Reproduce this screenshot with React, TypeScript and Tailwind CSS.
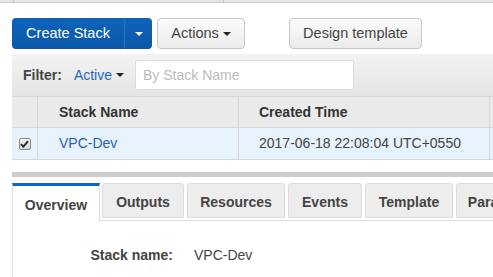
import React from "react";

function Caret({ className = "" }: { className?: string }) {
  return (
    <svg width="8" height="4" viewBox="0 0 8 4" className={className}>
      <path d="M0 0 L8 0 L4 4 Z" fill="currentColor" />
    </svg>
  );
}

export default function App() {
  const tabs = ["Outputs", "Resources", "Events", "Template", "Parameters"];
  const tabW = [82, 98, 74, 88, 100];
  return (
    <div
      className="w-[493px] h-[277px] overflow-hidden bg-white text-[14px] text-[#444]"
      style={{ fontFamily: '"Liberation Sans", Arial, sans-serif' }}
    >
      {/* top strip */}
      <div className="flex h-[3px] bg-[#e4e4e4] border-b border-[#cfcfcf]">
        <div className="w-[13px]" />
        <div className="w-[210px] border-l border-[#c8c8c8]" />
        <div className="flex-1 border-l border-[#c8c8c8]" />
      </div>

      {/* buttons */}
      <div className="flex items-start pl-[12px] pt-[15px] h-[51px]">
        <div className="flex h-[31px] w-[140px] rounded-[4px] bg-gradient-to-b from-[#0e63b8] to-[#0a58ab] text-white">
          <div className="w-[112px] flex items-center justify-center text-[14.5px]">Create Stack</div>
          <div className="w-px bg-[#2f74c0]" />
          <div className="flex-1 flex items-center justify-center">
            <Caret />
          </div>
        </div>
        <div className="ml-[5px] flex h-[31px] w-[88px] items-center justify-center gap-[4px] rounded-[4px] border border-[#c8c8c8] bg-gradient-to-b from-[#fbfbfb] to-[#ececec] text-[14.5px] text-[#444]">
          <span>Actions</span>
          <Caret className="text-[#222]" />
        </div>
        <div className="ml-[44px] flex h-[31px] w-[133px] items-center justify-center rounded-[4px] border border-[#c8c8c8] bg-gradient-to-b from-[#fbfbfb] to-[#ececec] text-[14.5px] text-[#444]">
          Design template
        </div>
      </div>

      {/* panel */}
      <div className="ml-[12px] overflow-hidden">
        {/* filter bar */}
        <div className="flex h-[42px] items-center bg-gradient-to-b from-[#f3f3f3] to-[#e4e4e4] pl-[11px]">
          <span className="font-bold text-[#444]">Filter:</span>
          <span className="ml-[12px] text-[#1e66c5]">Active</span>
          <Caret className="ml-[4px] text-[#222]" />
          <div className="ml-[11px] flex h-[30px] w-[219px] items-center rounded-[2px] border border-[#dcdcdc] bg-white pl-[7px] text-[#bbb]">
            By Stack Name
          </div>
        </div>

        {/* table header */}
        <div className="flex h-[32px] bg-[#eaeaea] border-t border-[#d8d8d8] border-b border-[#d5d5d5] font-bold text-[#333]">
          <div className="w-[25px] shrink-0" />
          <div className="w-[201px] shrink-0 border-l border-[#d5d5d5] flex items-center pl-[21px]">Stack Name</div>
          <div className="w-[251px] shrink-0 border-l border-[#d5d5d5] flex items-center pl-[20px]">Created Time</div>
          <div className="flex-1 border-l border-[#d5d5d5]" />
        </div>

        {/* row */}
        <div className="flex h-[32px] bg-[#e6f2fc] border-b border-[#d5d5d5]">
          <div className="w-[25px] shrink-0 flex items-center justify-center">
            <div className="flex h-[12px] w-[12px] items-center justify-center rounded-[2px] border border-[#888] bg-gradient-to-b from-[#f4f4f4] to-[#d8d8d8]">
              <svg width="9" height="8" viewBox="0 0 9 8">
                <path d="M1 4.2 L3.4 6.6 L8 1.2" stroke="#222" strokeWidth="1.8" fill="none" />
              </svg>
            </div>
          </div>
          <div className="w-[201px] shrink-0 border-l border-[#d5d5d5] flex items-center pl-[21px] text-[#2860b5]">VPC-Dev</div>
          <div className="w-[251px] shrink-0 border-l border-[#d5d5d5] flex items-center pl-[20px] text-[#444]">
            2017-06-18 22:08:04 UTC+0550
          </div>
          <div className="flex-1 border-l border-[#d5d5d5]" />
        </div>

        <div className="h-[12px]" />
        <div className="h-[5px] bg-[#cdcdcd]" />
        <div className="h-[6px]" />

        {/* tabs */}
        <div className="flex items-start border-l border-[#ddd]">
          <div className="w-[88px] shrink-0 h-[38px] -ml-px border-t-[3px] border-t-[#1166bb] border-l border-r border-[#ddd] bg-white flex items-center justify-center font-bold text-[#444] pt-[3px]">
            Overview
          </div>
          <div className="flex-1 min-w-0 flex flex-col">
            <div className="flex gap-[3px] pl-[2px] h-[35px]">
              {tabs.map((t, i) => (
                <div
                  key={t}
                  className="shrink-0 h-[35px] rounded-t-[3px] border border-[#dcdcdc] bg-[#ededed] flex items-start justify-center pt-[8px] font-bold text-[#444]"
                  style={{ width: tabW[i] }}
                >
                  {t}
                </div>
              ))}
            </div>
            <div className="h-[3px] border-b border-[#dcdcdc]" />
          </div>
        </div>

        {/* content */}
        <div className="h-[60px] border-l border-[#ddd] pt-[24px] flex">
          <div className="w-[160px] text-right font-bold text-[#444]">Stack name:</div>
          <div className="ml-[21px] text-[#444]">VPC-Dev</div>
        </div>
      </div>
    </div>
  );
}
